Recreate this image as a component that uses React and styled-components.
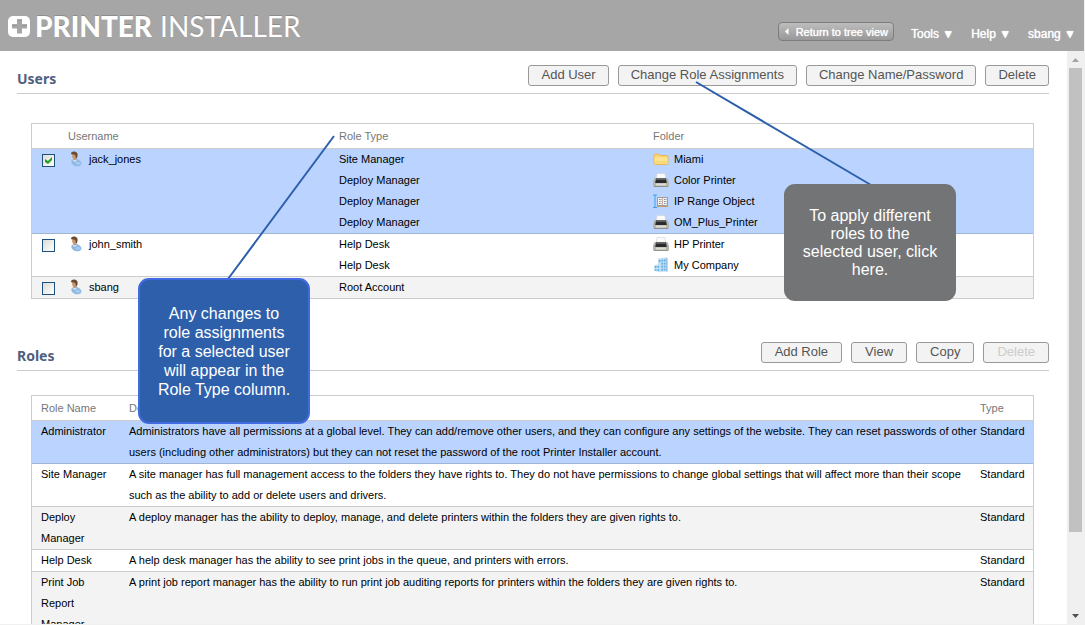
import React from "react";
import styled, { createGlobalStyle, css } from "styled-components";

const GlobalStyle = createGlobalStyle`
  *, *::before, *::after { box-sizing: border-box; }
  body {
    margin: 0;
    background: #f0f0f0;
    font-family: "Liberation Sans", Arial, sans-serif;
    font-size: 11px;
    line-height: 21px;
    color: #000;
  }
  button { font-family: inherit; }
`;

const Page = styled.div`
  position: relative;
  height: 100vh;
  display: flex;
  flex-direction: column;
  padding: 0 1px 1px 0;
  overflow: hidden;
`;

const Header = styled.header`
  flex: none;
  height: 51px;
  display: flex;
  align-items: flex-end;
  justify-content: space-between;
  padding: 0 8px 8px;
  background: #a6a6a6;
`;

const Logo = styled.div`
  display: flex;
  align-items: center;
  gap: 5px;
  color: #fff;
  font-family: Lato, sans-serif;
  font-size: 28px;
  line-height: 34px;
  font-weight: 400;
  text-shadow: 0 -1px 0 #8c8c8c;

  b { font-weight: 900; }
  span { display: flex; gap: 8px; }
`;

const Nav = styled.nav`
  display: flex;
  align-items: center;
  gap: 17px;
`;

const MenuButton = styled.button`
  border: 0;
  padding: 2px 0 0;
  background: none;
  color: #fff;
  font-size: 12px;
  line-height: 18px;
  text-shadow: 0 0 1px #fff;
`;

const ReturnButton = styled.button`
  display: flex;
  align-items: center;
  gap: 7px;
  height: 19px;
  margin-bottom: 2px;
  padding: 0 5px;
  border: 1px solid #7d7d7d;
  border-radius: 4px;
  background: linear-gradient(#bdbdbd, #989898);
  color: #fff;
  font-size: 11px;
  line-height: 16px;
  text-shadow: 0 0 1px #fff;
`;

const Body = styled.div`
  flex: 1;
  min-height: 0;
  display: flex;
`;

const Content = styled.main`
  flex: 1;
  min-width: 0;
  overflow: hidden;
  padding: 0 18px 0 17px;
  background: #fff;
`;

const SectionHeader = styled.div`
  display: flex;
  align-items: center;
  justify-content: space-between;
  padding: 14px 0 7px;
  border-bottom: 1px solid #ccc;
`;

const Title = styled.h2`
  margin: 0;
  padding-top: 6px;
  font-family: "Noto Sans", sans-serif;
  font-size: 14px;
  line-height: 15px;
  font-weight: 700;
  color: #515f7f;
`;

const Button = styled.button`
  height: 21px;
  padding: 0 12px 2px;
  border: 1px solid #999;
  border-radius: 3px;
  background: #f3f3f3;
  color: #555;
  font-size: 13px;
  line-height: 17px;

  &:disabled { color: #ccc; }
`;

const Actions = styled.div`
  display: flex;
  gap: 9px;

  ${Button} {
    padding-left: ${(p) => (p.$roomy ? "13px" : "12px")};
    padding-right: ${(p) => (p.$roomy ? "13px" : "12px")};
  }
`;

const TableWrap = styled.div`
  margin: ${(p) => (p.$compact ? "24px" : "29px")} 15px 29px 14px;
`;

const Table = styled.table`
  width: 100%;
  table-layout: fixed;
  border: 1px solid #ccc;
  border-bottom: 0;
  border-spacing: 0;
`;

const Col = styled.col`
  width: ${(p) => p.$w || "auto"};
`;

const cellPadding = css`
  padding: 0 ${(p) => (p.$flush ? "0" : "9px")} 0 ${(p) => (p.$narrow ? "2px" : "9px")};
`;

const Th = styled.th`
  height: 25px;
  ${cellPadding}
  border-bottom: 1px solid #ccc;
  color: #777;
  font-weight: 400;
  text-align: left;
`;

const Td = styled.td`
  ${cellPadding}
  border-bottom: 1px solid #ccc;
  vertical-align: top;
`;

const Row = styled.tr`
  background: ${(p) => (p.$shade ? "#f3f3f3" : "#fff")};
  ${(p) =>
    p.$selected &&
    css`
      background: #bad4ff;
      ${Td} { border-bottom-color: #a0b4d4; }
    `}
`;

const CheckCell = styled(Td)`
  padding: 5px 0 0 10px;
  line-height: 0;
`;

const Checkbox = styled.input.attrs({ type: "checkbox" })`
  appearance: none;
  display: block;
  width: 13px;
  height: 13px;
  margin: 0;
  border: 1px solid #1c5180;
  background: linear-gradient(135deg, #dcdcd7, #fff);

  &:checked::after {
    content: "";
    display: block;
    width: 7px;
    height: 7px;
    margin: 2px;
    background: #21a121;
    clip-path: polygon(0 28%, 43% 58%, 100% 0, 100% 43%, 43% 100%, 0 72%);
  }
`;

const Item = styled.div`
  display: flex;
  align-items: center;
  gap: 5px;
  height: 21px;

  svg { flex: none; margin-bottom: 1px; }
`;

const Scrollbar = styled.div`
  flex: none;
  width: 17px;
  display: flex;
  flex-direction: column;
  background: #f0f0f0;
`;

const ScrollArrow = styled.button`
  display: grid;
  place-items: center;
  height: 17px;
  padding: 0;
  border: 0;
  background: none;
`;

const Track = styled.div`
  flex: 1;
  padding: 0 2px;
`;

const Thumb = styled.div`
  height: 86%;
  background: #c1c1c1;
`;

const Leaders = styled.svg`
  position: absolute;
  inset: 0;
  width: 100%;
  height: 100%;
  pointer-events: none;
`;

const Callout = styled.aside`
  position: absolute;
  left: ${(p) => p.$x}px;
  top: ${(p) => p.$y}px;
  width: 172px;
  height: ${(p) => p.$h}px;
  display: flex;
  align-items: center;
  padding: 0 15px;
  border: 2px solid ${(p) => (p.$blue ? "#4169e1" : "#737476")};
  border-radius: 11px;
  background: ${(p) => (p.$blue ? "#2e5fab" : "#737476")};
  color: #fff;
  font-size: 16px;
  line-height: ${(p) => (p.$blue ? "19px" : "18px")};
  text-align: center;
`;

const LogoMark = () => (
  <svg width="22" height="22" viewBox="0 0 22 22" aria-hidden="true">
    <rect width="22" height="21" y="1" rx="5" fill="#fff" />
    <path d="M9 4.500h5v5h5v4h-5v5H9v-5H4v-4h5z" fill="#a6a6a6" />
    <path d="M9 4.500h5v1H9zM4 9.500h5v1H4zM14 9.500h5v1h-5z" fill="#858585" />
  </svg>
);

const UserIcon = () => (
  <svg width="16" height="16" viewBox="0 0 16 16" aria-hidden="true">
    <path d="M3.500 9.500C5 8 8 7.800 10 8.500c2.500 1 4 3 3.300 5-.8 1.800-4.300 2.200-6.800 1.200-2.500-1-3.800-3.500-3-5.200z" fill="#8fb8e2" />
    <path d="M7.500 11.500c2-1 4.500-.5 5 1-1 1.200-3.500 1.200-5 .5z" fill="#a9ccef" />
    <path d="M4.500 9l3-.6 1.200 1-2 1.500z" fill="#dbe8f5" />
    <path d="M4 3.500C4.500 1.500 8 1.500 8.700 4c.5 2-.2 4.500-1.700 5.300C5.500 9.500 4 6.500 4 3.500z" fill="#c9976c" />
    <path d="M3 3C3 .8 5.500.2 7.500.8c2.300.8 2.800 3.400 1.200 6.700C8 7.500 7.500 6 7.500 4.500 6.500 3.200 4.500 3.800 3 3z" fill="#6b4a35" />
  </svg>
);

const FolderIcon = () => (
  <svg width="16" height="16" viewBox="0 0 16 16" aria-hidden="true">
    <path d="M1 4.500Q1 3 2.500 3h3L7 4.500h6.500q1.500 0 1.500 1.500v6q0 1.500-1.500 1.500h-11Q1 13.500 1 12z" fill="#f9d873" stroke="#e5b653" />
    <path d="M1.500 6.500h13V12q0 1-1 1h-11q-1 0-1-1z" fill="#ffe48f" />
    <path d="M2 10h12v2.500H2z" fill="#fcd978" />
  </svg>
);

const PrinterIcon = () => (
  <svg width="16" height="16" viewBox="0 0 16 16" aria-hidden="true">
    <path d="M4 1.500h8l.7 5H3.300z" fill="#fafaf8" stroke="#d0d2d2" strokeWidth=".6" />
    <path d="M1.500 6h13L16 10v3.500q0 1-1 1H1q-1 0-1-1V10z" fill="#b3b4ac" />
    <path d="M3 6.500h10l.8 4.500H2.200z" fill="#2a2b2c" />
    <path d="M3.400 6.500h9.200l.3 1.500H3.100z" fill="#5d5f60" />
    <path d="M0 11.500h16v2q0 1-1 1H1q-1 0-1-1z" fill="#b5b5aa" />
    <path d="M3 11.500h10v2H3z" fill="#dcdcd4" />
    <path d="M1 14h14v.8H1z" fill="#85867e" />
  </svg>
);

const RangeIcon = () => (
  <svg width="16" height="16" viewBox="0 0 16 16" aria-hidden="true">
    <path d="M0 2h4M0 14.500h4M2 2v12.500" stroke="#36a4ec" fill="none" />
    <rect x="4.500" y="4.500" width="10" height="8" fill="#f4f2ee" stroke="#a09f9c" />
    <path d="M4 13.500h11" stroke="#c69c68" />
    <path d="M9.500 5v7" stroke="#c8b79c" />
    <path d="M6 6.500h2.500M6 8.500h2.500M6 10.500h2.500M11 6.500h2.500M11 8.500h2.500M11 10.500h2.500" stroke="#7f8fa8" strokeDasharray="1 .5" />
  </svg>
);

const CompanyIcon = () => (
  <svg width="16" height="16" viewBox="0 0 16 16" aria-hidden="true">
    <path d="M5 1.500L13 .5l1.500 1v13L5 15z" fill="#c3ddf0" />
    <path d="M13 .5l1.500 1v13H13z" fill="#9cc0dc" />
    <path d="M1 8l6-1v8.500L1 14z" fill="#cfe4f4" />
    <path d="M5.800 3h1.700v1.800H5.800zM8.300 2.800H10v1.800H8.300zM10.800 2.600h1.700v1.800h-1.700zM8.300 5.800H10v1.800H8.300zM10.800 5.700h1.700v1.800h-1.700zM8.300 8.800H10v1.800H8.300zM10.800 8.800h1.700v1.800h-1.700zM8.300 11.800H10v1.700H8.300zM10.800 11.700h1.700v1.700h-1.700zM1.800 9h1.700v2H1.800zM4.500 8.800h1.700v2H4.500zM1.800 12h1.700v1.500H1.800zM4.500 12h1.700v2H4.500z" fill="#58b1e8" />
  </svg>
);

const icons = {
  folder: FolderIcon,
  printer: PrinterIcon,
  range: RangeIcon,
  company: CompanyIcon,
};

const users = [
  {
    name: "jack_jones",
    selected: true,
    roles: ["Site Manager", "Deploy Manager", "Deploy Manager", "Deploy Manager"],
    folders: [
      ["folder", "Miami"],
      ["printer", "Color Printer"],
      ["range", "IP Range Object"],
      ["printer", "OM_Plus_Printer"],
    ],
  },
  {
    name: "john_smith",
    roles: ["Help Desk", "Help Desk"],
    folders: [
      ["printer", "HP Printer"],
      ["company", "My Company"],
    ],
  },
  { name: "sbang", shade: true, roles: ["Root Account"], folders: [] },
];

const roles = [
  {
    name: "Administrator",
    selected: true,
    text: "Administrators have all permissions at a global level. They can add/remove other users, and they can configure any settings of the website. They can reset passwords of other users (including other administrators) but they can not reset the password of the root Printer Installer account.",
  },
  {
    name: "Site Manager",
    text: "A site manager has full management access to the folders they have rights to. They do not have permissions to change global settings that will affect more than their scope such as the ability to add or delete users and drivers.",
  },
  {
    name: "Deploy Manager",
    shade: true,
    text: "A deploy manager has the ability to deploy, manage, and delete printers within the folders they are given rights to.",
  },
  {
    name: "Help Desk",
    text: "A help desk manager has the ability to see print jobs in the queue, and printers with errors.",
  },
  {
    name: "Print Job Report Manager",
    shade: true,
    text: "A print job report manager has the ability to run print job auditing reports for printers within the folders they are given rights to.",
  },
];

function UsersTable() {
  return (
    <Table>
      <colgroup>
        <Col $w="27px" />
        <Col $w="271px" />
        <Col $w="314px" />
        <Col />
      </colgroup>
      <thead>
        <tr>
          <Th aria-label="Selected" />
          <Th>Username</Th>
          <Th>Role Type</Th>
          <Th>Folder</Th>
        </tr>
      </thead>
      <tbody>
        {users.map((user) => (
          <Row key={user.name} $selected={user.selected} $shade={user.shade}>
            <CheckCell>
              <Checkbox aria-label={user.name} defaultChecked={user.selected} />
            </CheckCell>
            <Td>
              <Item>
                <UserIcon />
                {user.name}
              </Item>
            </Td>
            <Td>
              {user.roles.map((role, i) => (
                <Item key={i}>{role}</Item>
              ))}
            </Td>
            <Td>
              {user.folders.map(([kind, label]) => {
                const Icon = icons[kind];
                return (
                  <Item key={label}>
                    <Icon />
                    {label}
                  </Item>
                );
              })}
            </Td>
          </Row>
        ))}
      </tbody>
    </Table>
  );
}

function RolesTable() {
  return (
    <Table>
      <colgroup>
        <Col $w="88px" />
        <Col />
        <Col $w="55px" />
      </colgroup>
      <thead>
        <tr>
          <Th>Role Name</Th>
          <Th $flush>Description</Th>
          <Th $flush $narrow>Type</Th>
        </tr>
      </thead>
      <tbody>
        {roles.map((role) => (
          <Row key={role.name} $selected={role.selected} $shade={role.shade}>
            <Td>{role.name}</Td>
            <Td $flush>{role.text}</Td>
            <Td $flush $narrow>Standard</Td>
          </Row>
        ))}
      </tbody>
    </Table>
  );
}

export default function App() {
  return (
    <Page>
      <GlobalStyle />
      <Header>
        <Logo>
          <LogoMark />
          <span>
            <b>PRINTER</b>INSTALLER
          </span>
        </Logo>
        <Nav>
          <ReturnButton>
            <svg width="5" height="8" viewBox="0 0 5 8" aria-hidden="true">
              <path d="M4.500 0v7L1 3.500z" fill="#fff" />
            </svg>
            Return to tree view
          </ReturnButton>
          <MenuButton>Tools ▼</MenuButton>
          <MenuButton>Help ▼</MenuButton>
          <MenuButton>sbang ▼</MenuButton>
        </Nav>
      </Header>
      <Body>
        <Content>
          <section>
            <SectionHeader>
              <Title>Users</Title>
              <Actions>
                <Button>Add User</Button>
                <Button>Change Role Assignments</Button>
                <Button>Change Name/Password</Button>
                <Button>Delete</Button>
              </Actions>
            </SectionHeader>
            <TableWrap>
              <UsersTable />
            </TableWrap>
          </section>
          <section>
            <SectionHeader>
              <Title>Roles</Title>
              <Actions $roomy>
                <Button>Add Role</Button>
                <Button>View</Button>
                <Button>Copy</Button>
                <Button disabled>Delete</Button>
              </Actions>
            </SectionHeader>
            <TableWrap $compact>
              <RolesTable />
            </TableWrap>
          </section>
        </Content>
        <Scrollbar>
          <ScrollArrow aria-label="Scroll up">
            <svg width="7" height="4" viewBox="0 0 7 4">
              <path d="M0 4L3.500 0 7 4z" fill="#a3a3a3" />
            </svg>
          </ScrollArrow>
          <Track>
            <Thumb />
          </Track>
          <ScrollArrow aria-label="Scroll down">
            <svg width="7" height="4" viewBox="0 0 7 4">
              <path d="M0 0L3.500 4 7 0z" fill="#505050" />
            </svg>
          </ScrollArrow>
        </Scrollbar>
      </Body>
      <Leaders aria-hidden="true">
        <path d="M334 136L228 279M696 82L871 185" stroke="#2e5fab" strokeWidth="2" fill="none" />
      </Leaders>
      <Callout $blue $x={138} $y={278} $h={146}>
        Any changes to role assignments for a selected user will appear in the Role Type column.
      </Callout>
      <Callout $x={784} $y={184} $h={117}>
        To apply different roles to the selected user, click here.
      </Callout>
    </Page>
  );
}
